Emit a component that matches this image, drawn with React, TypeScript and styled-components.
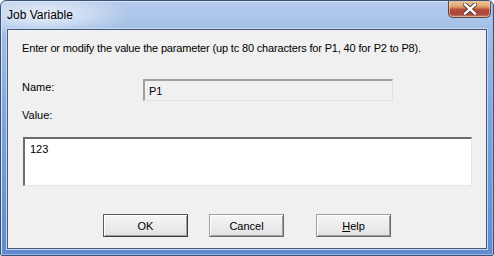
import * as React from 'react'
import styled, { createGlobalStyle } from 'styled-components'

const GlobalStyle = createGlobalStyle`
  html, body {
    margin: 0;
    padding: 0;
    background: #ffffff;
  }
  body {
    font-family: "Liberation Sans", Arial, sans-serif;
  }
`

export default function App() {
  return (
    <>
      <GlobalStyle />
      <Window>
        <TitleBar>
          <Title>Job Variable</Title>
          <CloseButton aria-label="Close">
            <svg width="14" height="12" viewBox="0 0 14 12">
              <path d="M2 1.5 L12 10.5 M12 1.5 L2 10.5" stroke="#4a3a38" strokeWidth="4.2" strokeLinecap="square" />
              <path d="M2 1.5 L12 10.5 M12 1.5 L2 10.5" stroke="#ffffff" strokeWidth="2.4" strokeLinecap="square" />
            </svg>
          </CloseButton>
        </TitleBar>
        <Client>
          <Instruction>
            Enter or modify the value the parameter (up tc 80 characters for P1, 40 for P2 to P8).
          </Instruction>
          <NameRow>
            <Label>Name:</Label>
            <ReadOnlyField>P1</ReadOnlyField>
          </NameRow>
          <ValueLabel>Value:</ValueLabel>
          <ValueBox defaultValue="123" spellCheck={false} />
          <ButtonRow>
            <Button $default $width={85}>OK</Button>
            <Button $width={75} $gap={21}>Cancel</Button>
            <Button $width={75} $gap={32}>
              <u>H</u>elp
            </Button>
          </ButtonRow>
        </Client>
      </Window>
    </>
  )
}

const Window = styled.div`
  box-sizing: border-box;
  width: 494px;
  height: 256px;
  display: flex;
  flex-direction: column;
  border: 1px solid #3c5378;
  border-radius: 6px 6px 2px 2px;
  background:
    radial-gradient(ellipse 90px 22px at 42px 14px, rgba(255, 255, 255, 0.75), rgba(255, 255, 255, 0) 100%),
    linear-gradient(to bottom, #b4cbeb 0px, #a3bfe7 30px, #7fa4dc 120px, #5f8bcf 256px);
  box-shadow: inset 1px 1px 0 #d6e3f5, inset -1px -1px 0 #9ab7e2;
  overflow: hidden;
`

const TitleBar = styled.div`
  height: 28px;
  display: flex;
  align-items: flex-start;
  justify-content: space-between;
  padding: 0 2px 0 6px;
`

const Title = styled.div`
  margin-top: 7px;
  font-family: "Liberation Sans", Arial, sans-serif;
  font-size: 12px;
  color: #000000;
`

const CloseButton = styled.div`
  width: 43px;
  height: 18px;
  box-sizing: border-box;
  margin-top: -1px;
  display: flex;
  align-items: center;
  justify-content: center;
  border: 1px solid #5a4a48;
  border-top: none;
  border-radius: 0 0 5px 5px;
  background: linear-gradient(
    to bottom,
    #e9c9a0 0%,
    #e5b27e 30%,
    #d48a5a 45%,
    #b5503c 55%,
    #a8473a 80%,
    #c6785e 100%
  );
  box-shadow: inset 0 0 0 1px rgba(255, 230, 200, 0.5);
`

const Client = styled.div`
  flex: 1;
  margin: 0 6px 6px 6px;
  border: 1px solid #43597d;
  background: #f0f0f0;
  display: flex;
  flex-direction: column;
  padding: 12px 14px 0 14px;
  font-family: "Liberation Sans", Arial, sans-serif;
  font-size: 11px;
  color: #000000;
  box-shadow: 0 0 0 1px #c5d6ee;
`

const Instruction = styled.div`
  line-height: 13px;
  white-space: nowrap;
  letter-spacing: -0.16px;
`

const NameRow = styled.div`
  margin-top: 24px;
  display: flex;
  align-items: flex-start;
`

const Label = styled.div`
  width: 121px;
  margin-top: 2px;
  line-height: 13px;
`

const ReadOnlyField = styled.div`
  box-sizing: border-box;
  width: 250px;
  height: 22px;
  padding: 3px 4px;
  line-height: 14px;
  background: #f0f0f0;
  border-style: solid;
  border-width: 2px 1px 1px 2px;
  border-color: #a0a0a0 #e3e3e3 #e3e3e3 #a0a0a0;
  box-shadow: inset 1px 1px 0 #f0f0f0;
`

const ValueLabel = styled.div`
  margin-top: 8px;
  line-height: 13px;
`

const ValueBox = styled.textarea`
  box-sizing: border-box;
  margin: 15px 0 0 1px;
  width: 449px;
  height: 49px;
  resize: none;
  outline: none;
  padding: 4px 5px;
  font-family: "Liberation Sans", Arial, sans-serif;
  font-size: 11px;
  line-height: 13px;
  color: #000000;
  background: #ffffff;
  border-style: solid;
  border-width: 2px 1px 1px 2px;
  border-color: #6d6d6d #e3e3e3 #e3e3e3 #6d6d6d;
`

const ButtonRow = styled.div`
  margin-top: 28px;
  display: flex;
  justify-content: center;
`

const Button = styled.button<{ $default?: boolean; $width: number; $gap?: number }>`
  box-sizing: border-box;
  width: ${(p) => p.$width}px;
  margin-left: ${(p) => p.$gap ?? 0}px;
  height: 23px;
  padding: 0;
  font-family: "Liberation Sans", Arial, sans-serif;
  font-size: 11px;
  color: #000000;
  background: linear-gradient(to bottom, #f6f6f6 0%, #ececec 50%, #e2e2e2 100%);
  border: 1px solid ${(p) => (p.$default ? '#5c5c5c' : '#a0a0a0')};
  border-right-color: ${(p) => (p.$default ? '#3c3c3c' : '#696969')};
  border-bottom-color: ${(p) => (p.$default ? '#3c3c3c' : '#696969')};
  box-shadow: inset 1px 1px 0 #ffffff, inset -1px -1px 0 #a0a0a0;
  u {
    text-decoration: underline;
  }
`
